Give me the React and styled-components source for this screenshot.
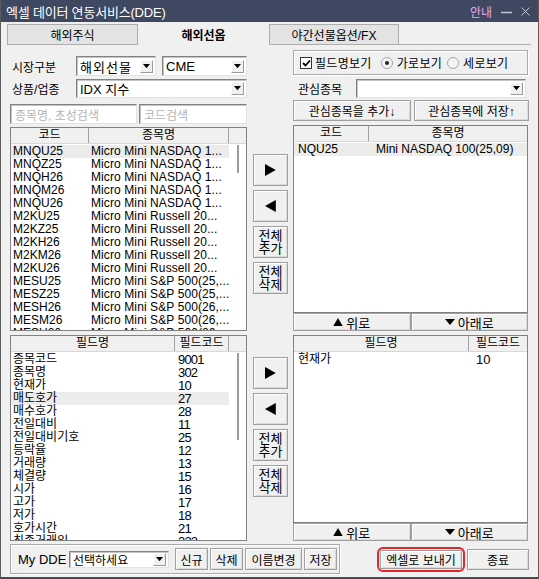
import React from 'react';
import styled, { createGlobalStyle } from 'styled-components';

const GlobalStyle = createGlobalStyle`
  html, body {
    margin: 0;
    padding: 0;
    background: #f0f0f0;
  }
  body {
    font-family: "Liberation Sans", "Noto Sans CJK KR", sans-serif;
    font-size: 12px;
    color: #000;
  }
  * {
    box-sizing: border-box;
  }
`;

const upperItems = [
  ['MNQU25', 'Micro Mini NASDAQ 1...'],
  ['MNQZ25', 'Micro Mini NASDAQ 1...'],
  ['MNQH26', 'Micro Mini NASDAQ 1...'],
  ['MNQM26', 'Micro Mini NASDAQ 1...'],
  ['MNQU26', 'Micro Mini NASDAQ 1...'],
  ['M2KU25', 'Micro Mini Russell 20...'],
  ['M2KZ25', 'Micro Mini Russell 20...'],
  ['M2KH26', 'Micro Mini Russell 20...'],
  ['M2KM26', 'Micro Mini Russell 20...'],
  ['M2KU26', 'Micro Mini Russell 20...'],
  ['MESU25', 'Micro Mini S&P 500(25,...'],
  ['MESZ25', 'Micro Mini S&P 500(25,...'],
  ['MESH26', 'Micro Mini S&P 500(26,...'],
  ['MESM26', 'Micro Mini S&P 500(26,...'],
  ['MESU26', 'Micro Mini S&P 500(26,...'],
];

const fields = [
  ['종목코드', '9001'],
  ['종목명', '302'],
  ['현재가', '10'],
  ['매도호가', '27'],
  ['매수호가', '28'],
  ['전일대비', '11'],
  ['전일대비기호', '25'],
  ['등락율', '12'],
  ['거래량', '13'],
  ['체결량', '15'],
  ['시가', '16'],
  ['고가', '17'],
  ['저가', '18'],
  ['호가시간', '21'],
  ['최종거래일', '322'],
];

const Window = styled.div`
  width: 539px;
  height: 579px;
  display: flex;
  flex-direction: column;
  background: #f0f0f0;
  border-left: 1px solid #5c5c5c;
  border-right: 1px solid #5c5c5c;
  border-bottom: 2px solid #4a4a4a;
  overflow: hidden;
`;

const TitleBar = styled.div`
  height: 22px;
  flex-shrink: 0;
  margin: 0 -1px;
  background: #3e4860;
  color: #fff;
  display: flex;
  align-items: center;
  padding: 0 9px 0 6px;
`;

const Title = styled.span`
  flex: 1;
  font-size: 13px;
  letter-spacing: -0.2px;
`;

const HelpLink = styled.span`
  color: #e7a9ee;
  font-size: 12px;
  margin-right: 9px;
`;

const WinButtons = styled.div`
  display: flex;
  align-items: center;
  gap: 9px;
`;

const TabRow = styled.div`
  display: flex;
  height: 23px;
  flex-shrink: 0;
  padding: 2px 0 0 6px;
`;

const Tab = styled.div`
  width: ${(p) => p.$w}px;
  display: flex;
  align-items: center;
  justify-content: center;
  font-size: 12px;
  ${(p) =>
    p.$active
      ? 'font-weight: bold; background: #f0f0f0;'
      : 'background: #e3e3e3; border: 1px solid #adadad;'}
`;

const TabFill = styled.div`
  flex: 1;
  margin-right: 7px;
  border-bottom: 1px solid #adadad;
`;

const Panel = styled.div`
  flex: 1;
  display: flex;
  flex-direction: column;
  padding: 5px 0 0 9px;
`;

const Columns = styled.div`
  display: grid;
  grid-template-columns: 237px 46px 235px;
  height: ${(p) => p.$h}px;
  margin-top: ${(p) => p.$mt || 0}px;
  flex-shrink: 0;
`;

const Stack = styled.div`
  display: flex;
  flex-direction: column;
  padding-top: ${(p) => p.$pt || 0}px;
`;

const FormRow = styled.div`
  display: flex;
  align-items: center;
  height: ${(p) => p.$h}px;
  margin-top: ${(p) => p.$mt || 0}px;
  margin-left: ${(p) => p.$ml || 0}px;
  gap: ${(p) => p.$gap || 0}px;
`;

const Label = styled.span`
  width: ${(p) => p.$w}px;
  padding-left: ${(p) => p.$pl || 0}px;
  font-size: ${(p) => p.$fs || 12}px;
  flex-shrink: 0;
`;

const Sunken = styled.div`
  width: ${(p) => p.$w}px;
  height: 100%;
  background: #fff;
  border: 1px solid;
  border-color: #828282 #e3e3e3 #e3e3e3 #828282;
  box-shadow: inset 1px 1px 0 #c4c4c4;
  display: flex;
  align-items: center;
  flex-shrink: 0;
`;

const ComboText = styled.span`
  flex: 1;
  padding-left: 3px;
  font-size: ${(p) => p.$fs || 13}px;
  letter-spacing: ${(p) => p.$ls || 0}px;
  white-space: nowrap;
`;

const ComboArrow = styled.span`
  width: 13px;
  height: 13px;
  margin-right: 2px;
  background: #f0f0f0;
  border: 1px solid;
  border-color: #fff #9a9a9a #9a9a9a #fff;
  display: flex;
  align-items: center;
  justify-content: center;
`;

const Placeholder = styled.span`
  padding-left: 4px;
  color: #b4b4b4;
  font-size: 12px;
`;

const Btn = styled.button`
  font-family: "Liberation Sans", "Noto Sans CJK KR", sans-serif;
  font-size: ${(p) => p.$fs || 12}px;
  color: #000;
  width: ${(p) => (p.$w ? `${p.$w}px` : 'auto')};
  height: ${(p) => p.$h || 21}px;
  padding: 0;
  background: #f0f0f0;
  border: 1px solid #a0a0a0;
  box-shadow: inset 1px 1px 0 #fff, inset -1px -1px 0 #dadada;
  display: flex;
  align-items: center;
  justify-content: center;
  gap: 3px;
  flex-shrink: 0;
  line-height: ${(p) => p.$lh || 'normal'};
  white-space: pre-line;
`;

const Group = styled.div`
  height: ${(p) => p.$h}px;
  width: ${(p) => (p.$w ? `${p.$w}px` : 'auto')};
  border: 1px solid #a9a9a9;
  box-shadow: inset 1px 1px 0 #fff, 1px 1px 0 #fff;
  display: flex;
  align-items: center;
  padding-left: ${(p) => p.$pl || 0}px;
  flex-shrink: 0;
`;

const CheckBox = styled.span`
  width: 12px;
  height: 12px;
  background: #fff;
  border: 1px solid #333;
  display: flex;
  align-items: center;
  justify-content: center;
  margin-right: 3px;
`;

const Radio = styled.span`
  width: 12px;
  height: 12px;
  border-radius: 50%;
  background: #f4f4f4;
  border: 1px solid #a8a8a8;
  display: flex;
  align-items: center;
  justify-content: center;
  margin: 0 4px 0 ${(p) => p.$ml || 0}px;

  &::after {
    content: '';
    width: 4px;
    height: 4px;
    border-radius: 50%;
    background: ${(p) => (p.$on ? '#222' : 'transparent')};
  }
`;

const OptText = styled.span`
  font-size: 12px;
  letter-spacing: 0.3px;
  white-space: nowrap;
`;

const ListWrap = styled.div`
  display: flex;
  flex-direction: column;
  margin-top: ${(p) => p.$mt || 0}px;
  height: ${(p) => p.$h}px;
`;

const ListBox = styled.div`
  flex: 1;
  min-height: 0;
  border: 1px solid #828282;
  background: #fff;
  display: flex;
  flex-direction: column;
  overflow: hidden;
`;

const Head = styled.div`
  display: flex;
  height: 16px;
  flex-shrink: 0;
  background: #f0f0f0;
  border-bottom: 1px solid #d8d8d8;
`;

const HeadCell = styled.div`
  width: ${(p) => (p.$w ? `${p.$w}px` : 'auto')};
  flex: ${(p) => (p.$w ? '0 0 auto' : '1')};
  border-right: ${(p) => (p.$last ? 'none' : '1px solid #a0a0a0')};
  text-align: center;
  font-size: 12px;
  line-height: 15px;
`;

const Body = styled.div`
  flex: 1;
  min-height: 0;
  display: flex;
`;

const Rows = styled.div`
  flex: 1;
  padding-top: 1px;
  overflow: hidden;
`;

const Row = styled.div`
  display: flex;
  height: 13px;
  background: ${(p) => (p.$sel ? '#ececec' : 'transparent')};
`;

const Cell = styled.div`
  width: ${(p) => p.$w}px;
  flex-shrink: 0;
  padding-left: ${(p) => p.$pl}px;
  font-size: ${(p) => p.$fs || 12}px;
  letter-spacing: ${(p) => p.$ls || 0}px;
  line-height: 13px;
  white-space: nowrap;
`;

const Track = styled.div`
  width: 17px;
  flex-shrink: 0;
  display: flex;
  justify-content: center;
`;

const Thumb = styled.div`
  width: 2px;
  margin-top: ${(p) => p.$top}px;
  height: ${(p) => p.$h}px;
  background: #9b9b9b;
`;

const MoveRow = styled.div`
  display: flex;
  height: 18px;
  flex-shrink: 0;
`;

const MoveBtn = styled(Btn)`
  flex: 1;
  height: 18px;
  font-size: 13px;
`;

const SideButtons = styled.div`
  display: flex;
  flex-direction: column;
  align-items: flex-start;
  gap: 4px;
  padding: ${(p) => p.$top}px 0 0 6px;
`;

const BottomBar = styled.div`
  display: flex;
  align-items: center;
  height: 30px;
  margin-top: 3px;
  width: 519px;
`;

const Spacer = styled.div`
  flex: 1;
`;

const Highlight = styled.div`
  border: 2px solid #e3262a;
  border-radius: 6px;
  padding: 1px;
  margin-right: 2px;
  display: flex;
`;

const Tri = ({ dir = 'down', size = 7, color = '#000' }) => {
  const pts = {
    down: `0,0 ${size},0 ${size / 2},${size * 0.6}`,
    up: `0,${size * 0.85} ${size},${size * 0.85} ${size / 2},0`,
    right: `0,0 ${size * 0.9},${size / 2} 0,${size}`,
    left: `${size * 0.9},0 0,${size / 2} ${size * 0.9},${size}`,
  }[dir];
  const w = dir === 'right' || dir === 'left' ? size * 0.9 : size;
  const h = dir === 'down' ? size * 0.6 : dir === 'up' ? size * 0.85 : size;
  return (
    <svg width={w} height={h} viewBox={`0 0 ${w} ${h}`}>
      <polygon points={pts} fill={color} />
    </svg>
  );
};

const Combo = ({ w, fs, ls, children }) => (
  <Sunken $w={w}>
    <ComboText $fs={fs} $ls={ls}>
      {children}
    </ComboText>
    <ComboArrow>
      <Tri dir="down" size={7} />
    </ComboArrow>
  </Sunken>
);

const Transfer = ({ top }) => (
  <SideButtons $top={top}>
    <Btn $w={35} $h={32}>
      <Tri dir="right" size={12} />
    </Btn>
    <Btn $w={35} $h={32}>
      <Tri dir="left" size={12} />
    </Btn>
    <Btn $w={35} $h={32} $fs={13} $lh="13px">
      {'전체\n추가'}
    </Btn>
    <Btn $w={35} $h={32} $fs={13} $lh="13px">
      {'전체\n삭제'}
    </Btn>
  </SideButtons>
);

const MoveButtons = () => (
  <MoveRow>
    <MoveBtn>
      <Tri dir="up" size={10} />
      위로
    </MoveBtn>
    <MoveBtn>
      <Tri dir="down" size={10} />
      아래로
    </MoveBtn>
  </MoveRow>
);

export default function App() {
  return (
    <>
      <GlobalStyle />
      <Window>
        <TitleBar>
          <Title>엑셀 데이터 연동서비스(DDE)</Title>
          <HelpLink>안내</HelpLink>
          <WinButtons>
            <svg width="11" height="8" viewBox="0 0 11 8">
              <line x1="0" y1="5.5" x2="11" y2="5.5" stroke="#c3c9d6" strokeWidth="1.5" />
            </svg>
            <svg width="9" height="9" viewBox="0 0 9 9">
              <path d="M0.5 0.5 L8.5 8.5 M8.5 0.5 L0.5 8.5" stroke="#c3c9d6" strokeWidth="1" />
            </svg>
          </WinButtons>
        </TitleBar>

        <TabRow>
          <Tab $w={131}>해외주식</Tab>
          <Tab $w={131} $active>
            해외선옵
          </Tab>
          <Tab $w={130}>야간선물옵션/FX</Tab>
          <TabFill />
        </TabRow>

        <Panel>
          <Columns $h={74}>
            <Stack $pt={6}>
              <FormRow $h={20}>
                <Label $w={66} $pl={2}>시장구분</Label>
                <Combo w={80} ls={1}>해외선물</Combo>
                <Spacer />
                <Combo w={85}>CME</Combo>
              </FormRow>
              <FormRow $h={19} $mt={3}>
                <Label $w={66} $pl={2}>상품/업종</Label>
                <Combo w={171}>IDX 지수</Combo>
              </FormRow>
              <FormRow $h={20} $mt={6} $gap={2}>
                <Sunken $w={127}>
                  <Placeholder>종목명, 초성검색</Placeholder>
                </Sunken>
                <Sunken $w={108}>
                  <Placeholder>코드검색</Placeholder>
                </Sunken>
              </FormRow>
            </Stack>
            <div />
            <Stack>
              <Group $h={25} $pl={6}>
                <CheckBox>
                  <svg width="9" height="8" viewBox="0 0 9 8">
                    <path d="M1 4 L3.5 6.5 L8 1.5" stroke="#000" strokeWidth="1.8" fill="none" />
                  </svg>
                </CheckBox>
                <OptText>필드명보기</OptText>
                <Radio $on $ml={9} />
                <OptText>가로보기</OptText>
                <Radio $ml={5} />
                <OptText>세로보기</OptText>
              </Group>
              <FormRow $h={19} $mt={4}>
                <Label $w={63} $pl={5}>관심종목</Label>
                <Combo w={170}> </Combo>
              </FormRow>
              <FormRow $h={21} $mt={2} $gap={3}>
                <Btn $w={118}>관심종목을 추가↓</Btn>
                <Btn $w={115}>관심종목에 저장↑</Btn>
              </FormRow>
            </Stack>
          </Columns>

          <Columns $h={207}>
            <ListWrap $mt={3} $h={204}>
              <ListBox>
                <Head>
                  <HeadCell $w={78}>코드</HeadCell>
                  <HeadCell $w={140}>종목명</HeadCell>
                </Head>
                <Body>
                  <Rows>
                    {upperItems.map(([code, name], i) => (
                      <Row key={code} $sel={i === 0}>
                        <Cell $w={78} $pl={2}>{code}</Cell>
                        <Cell $w={140} $pl={2} $ls={0.1}>{name}</Cell>
                      </Row>
                    ))}
                  </Rows>
                  <Track>
                    <Thumb $top={1} $h={28} />
                  </Track>
                </Body>
              </ListBox>
            </ListWrap>
            <Transfer top={30} />
            <ListWrap $mt={1} $h={206}>
              <ListBox>
                <Head>
                  <HeadCell $w={75}>코드</HeadCell>
                  <HeadCell $last>종목명</HeadCell>
                </Head>
                <Body>
                  <Rows>
                    <Row $sel>
                      <Cell $w={75} $pl={4}>NQU25</Cell>
                      <Cell $w={158} $pl={7}>Mini NASDAQ 100(25,09)</Cell>
                    </Row>
                  </Rows>
                </Body>
              </ListBox>
              <MoveButtons />
            </ListWrap>
          </Columns>

          <Columns $h={207} $mt={3}>
            <ListWrap $mt={1} $h={206}>
              <ListBox>
                <Head>
                  <HeadCell $w={164}>필드명</HeadCell>
                  <HeadCell $w={54}>필드코드</HeadCell>
                </Head>
                <Body>
                  <Rows>
                    {fields.map(([name, code], i) => (
                      <Row key={name} $sel={i === 3}>
                        <Cell $w={164} $pl={2}>{name}</Cell>
                        <Cell $w={54} $pl={3} $fs={13} $ls={-0.8}>{code}</Cell>
                      </Row>
                    ))}
                  </Rows>
                  <Track>
                    <Thumb $top={1} $h={87} />
                  </Track>
                </Body>
              </ListBox>
            </ListWrap>
            <Transfer top={23} />
            <ListWrap $mt={1} $h={206}>
              <ListBox>
                <Head>
                  <HeadCell $w={175}>필드명</HeadCell>
                  <HeadCell $last>필드코드</HeadCell>
                </Head>
                <Body>
                  <Rows>
                    <Row>
                      <Cell $w={175} $pl={4}>현재가</Cell>
                      <Cell $w={58} $pl={7} $fs={13}>10</Cell>
                    </Row>
                  </Rows>
                </Body>
              </ListBox>
              <MoveButtons />
            </ListWrap>
          </Columns>

          <BottomBar>
            <Group $h={30} $w={330} $pl={7}>
              <Label $w={51} $fs={13}>My DDE</Label>
              <FormRow $h={17}>
                <Combo w={100} fs={12}>선택하세요</Combo>
              </FormRow>
              <FormRow $h={22} $gap={2} $ml={6}>
                <Btn $w={33} $h={22}>신규</Btn>
                <Btn $w={33} $h={22}>삭제</Btn>
                <Btn $w={57} $h={22}>이름변경</Btn>
                <Btn $w={33} $h={22}>저장</Btn>
              </FormRow>
            </Group>
            <Spacer />
            <Highlight>
              <Btn $w={82} $h={19}>엑셀로 보내기</Btn>
            </Highlight>
            <Btn $w={62} $h={21}>종료</Btn>
          </BottomBar>
        </Panel>
      </Window>
    </>
  );
}
